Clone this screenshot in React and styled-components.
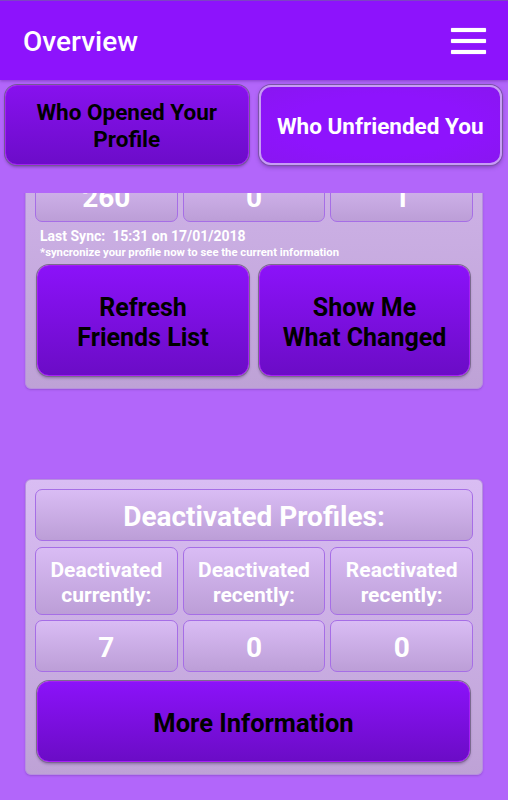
import React, { useLayoutEffect, useRef } from "react";
import styled, { createGlobalStyle } from "styled-components";

const Global = createGlobalStyle`
  html, body { margin: 0; padding: 0; height: 100%; }
  body { font-family: Roboto, "Noto Sans", "Liberation Sans", sans-serif; background: #b266fa; }
  #root { height: 100%; }
`;

const Screen = styled.div`
  height: 100vh;
  display: flex;
  flex-direction: column;
  background: #b266fa;
  overflow: hidden;
`;

const Header = styled.header`
  flex: 0 0 auto;
  height: 79px;
  border-top: 1px solid #7d44c4;
  background: #8d13fc;
  display: flex;
  align-items: center;
  justify-content: space-between;
  padding: 0 22px 0 23px;
  box-shadow: 0 1px 3px rgba(80, 20, 140, 0.45);
  position: relative;
  z-index: 2;
`;

const Title = styled.h1`
  margin: 0;
  color: #fff;
  font-size: 28px;
  font-weight: 500;
  line-height: 1;
  transform: translateY(1px);
`;

const Burger = styled.button`
  width: 35px;
  height: 26px;
  padding: 0;
  border: 0;
  background: transparent;
  display: flex;
  flex-direction: column;
  justify-content: space-between;
`;

const BurgerBar = styled.span`
  display: block;
  height: 4px;
  background: #fff;
  box-shadow: 0 0 1px #e8c8ff;
  border-radius: 1px;
`;

const TabBar = styled.nav`
  flex: 0 0 auto;
  display: grid;
  grid-template-columns: 1fr 1fr;
  gap: 10px;
  padding: 5px 6px 28px 5px;
`;

const Tab = styled.button`
  height: 80px;
  border-radius: 12px;
  font-family: Roboto, "Noto Sans", sans-serif;
  font-weight: 700;
  font-size: 22.5px;
  line-height: 27px;
  padding: 2px 4px 0 4px;
  cursor: pointer;
  white-space: nowrap;
  color: ${(p) => (p.$active ? "#ffffff" : "#000000")};
  background: ${(p) =>
    p.$active
      ? "radial-gradient(ellipse at center, #8e13fd 55%, #8916f0 100%)"
      : "linear-gradient(#8711ee, #6c0cc9)"};
  border: ${(p) => (p.$active ? "2px solid #c79cf5" : "1px solid #a121f2")};
  box-shadow: ${(p) =>
    p.$active
      ? "0 0 0 1px #7a55a6, 0 2px 4px rgba(70, 30, 110, 0.5)"
      : "0 0 0 1px #735a96, 0 2px 3px rgba(60, 30, 90, 0.45)"};
`;

const Scroller = styled.main`
  flex: 1 1 auto;
  overflow-y: auto;
  scrollbar-width: none;
  &::-webkit-scrollbar { display: none; }
`;

const Content = styled.div`
  display: flex;
  flex-direction: column;
  gap: 90px;
  padding: 0 25px 25px 25px;
`;

const Card = styled.section`
  background: linear-gradient(#d9bdf3, #bea2d6);
  border: 1px solid #b690de;
  border-radius: 6px;
  padding: 9px 9px 12px 9px;
  display: flex;
  flex-direction: column;
  box-shadow: 0 1px 2px rgba(90, 40, 140, 0.3);
`;

const HeadCell = styled.div`
  height: 52px;
  box-sizing: border-box;
  display: flex;
  align-items: center;
  justify-content: center;
  border: 1px solid #a66ee6;
  border-radius: 7px;
  background: linear-gradient(#d9bcf4, #bc9ed7);
  color: #fff;
  font-weight: 700;
  font-size: 28px;
  padding-top: 2px;
  margin-bottom: 6px;
`;

const Row = styled.div`
  display: grid;
  grid-template-columns: repeat(3, 1fr);
  gap: 5px;
  margin-bottom: ${(p) => p.$mb || 0}px;
`;

const Cell = styled.div`
  height: ${(p) => p.$h}px;
  box-sizing: border-box;
  display: flex;
  align-items: center;
  justify-content: center;
  text-align: center;
  border: 1px solid #a66ee6;
  border-radius: 7px;
  background: linear-gradient(#d9bcf4, #bc9ed7);
  color: #fff;
  font-weight: 700;
  font-size: ${(p) => p.$fs}px;
  line-height: ${(p) => (p.$fs > 24 ? 1 : "25px")};
  padding-top: 3px;
`;

const SyncText = styled.p`
  margin: ${(p) => p.$mt || 0}px 0 0 0;
  padding-left: 5px;
  color: #fff;
  font-weight: 700;
  font-size: ${(p) => p.$fs}px;
  line-height: ${(p) => p.$lh}px;
  white-space: pre;
`;

const ActionRow = styled.div`
  display: grid;
  grid-template-columns: 212px 211px;
  gap: 10px;
  padding: 0 3px 0 2px;
  margin-top: 4px;
`;

const Action = styled.button`
  height: ${(p) => p.$h}px;
  border-radius: 12px;
  border: 1px solid #a51ff5;
  background: linear-gradient(#8b12f9, #6b0cc6);
  box-shadow: 0 0 0 1px #7a6a8e, 0 2px 3px rgba(60, 30, 90, 0.4);
  color: #000;
  font-family: Roboto, "Noto Sans", sans-serif;
  font-weight: 700;
  font-size: ${(p) => p.$fs}px;
  line-height: 30px;
  padding-top: ${(p) => p.$pt || 2}px;
  white-space: nowrap;
  cursor: pointer;
  margin: ${(p) => p.$m || "0"};
`;

export default function App() {
  const ref = useRef(null);
  useLayoutEffect(() => {
    if (ref.current) ref.current.scrollTop = ref.current.scrollHeight;
  }, []);

  return (
    <Screen>
      <Global />
      <Header>
        <Title>Overview</Title>
        <Burger aria-label="menu">
          <BurgerBar />
          <BurgerBar />
          <BurgerBar />
        </Burger>
      </Header>
      <TabBar>
        <Tab>
          Who Opened Your
          <br />
          Profile
        </Tab>
        <Tab $active>Who Unfriended You</Tab>
      </TabBar>
      <Scroller ref={ref}>
        <Content>
          <Card>
            <HeadCell>Friends List:</HeadCell>
            <Row $mb={5}>
              <Cell $h={68} $fs={21}>
                Friends
                <br />
                currently:
              </Cell>
              <Cell $h={68} $fs={21}>
                Unfriended
                <br />
                recently:
              </Cell>
              <Cell $h={68} $fs={21}>
                New friends
                <br />
                recently:
              </Cell>
            </Row>
            <Row>
              <Cell $h={52} $fs={28}>260</Cell>
              <Cell $h={52} $fs={28}>0</Cell>
              <Cell $h={52} $fs={28}>1</Cell>
            </Row>
            <SyncText $fs={14} $lh={18} $mt={5}>
              {"Last Sync:  15:31 on 17/01/2018"}
            </SyncText>
            <SyncText $fs={11.3} $lh={16}>
              *syncronize your profile now to see the current information
            </SyncText>
            <ActionRow>
              <Action $h={111} $fs={25} $pt={5}>
                Refresh
                <br />
                Friends List
              </Action>
              <Action $h={111} $fs={25} $pt={5}>
                Show Me
                <br />
                What Changed
              </Action>
            </ActionRow>
          </Card>
          <Card>
            <HeadCell>Deactivated Profiles:</HeadCell>
            <Row $mb={5}>
              <Cell $h={68} $fs={21}>
                Deactivated
                <br />
                currently:
              </Cell>
              <Cell $h={68} $fs={21}>
                Deactivated
                <br />
                recently:
              </Cell>
              <Cell $h={68} $fs={21}>
                Reactivated
                <br />
                recently:
              </Cell>
            </Row>
            <Row>
              <Cell $h={52} $fs={28}>7</Cell>
              <Cell $h={52} $fs={28}>0</Cell>
              <Cell $h={52} $fs={28}>0</Cell>
            </Row>
            <Action $h={81} $fs={25.5} $pt={3} $m="9px 3px 0 2px">
              More Information
            </Action>
          </Card>
        </Content>
      </Scroller>
    </Screen>
  );
}
